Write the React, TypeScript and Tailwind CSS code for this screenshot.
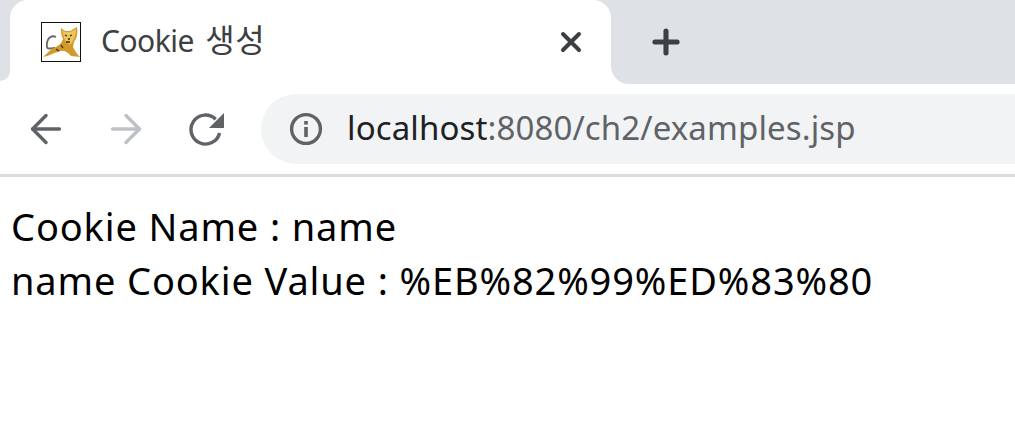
import { Plus, X, ArrowLeft, ArrowRight } from 'lucide-react';

function TomcatIcon() {
  return (
    <svg width="40" height="40" viewBox="0 0 40 40" className="shrink-0">
      <rect x="0.5" y="0.5" width="39" height="39" fill="#fff" stroke="#111" />
      <path d="M14 26 C8 26 5 29 6 21 C7 15 11 13 15 15" fill="none" stroke="#666" strokeWidth="1.8" />
      <path d="M2 35 C7 31 9 27 15 25 C19 23 21 20 22 17 C20 13 20 10 20 6 L24 9 L29 9 L36 5 C37 11 36 16 33 20 L32 25 C34 29 36 32 39 35 L30 34 C25 28 21 28 17 30 C12 31 8 34 2 35 Z" fill="#d29a2b" />
      <path d="M21 8 L24 10 L29 10 L35 7 C35 13 33 18 30 22 C27 23 25 20 23 16 Z" fill="#eec55b" />
      <path d="M24 13 L26 14 M29 14 L31 13 M27 17 L29 17 M25 20 L29 20 M20 23 L22 26 M15 27 L18 29" stroke="#3a2a10" strokeWidth="1.3" fill="none" />
    </svg>
  );
}

function ReloadIcon() {
  return (
    <svg width="36" height="36" viewBox="0 0 36 36" fill="none">
      <path d="M30.6 22 A14.5 14.5 0 1 1 26.75 8.25" stroke="#5f6368" strokeWidth="3.4" />
      <path d="M35 2 V17 H20 Z" fill="#5f6368" />
    </svg>
  );
}

function InfoIcon() {
  return (
    <svg width="34" height="34" viewBox="0 0 34 34" fill="none">
      <circle cx="17" cy="17" r="14.4" stroke="#5f6368" strokeWidth="3.4" />
      <rect x="15.2" y="15" width="3.6" height="10" fill="#5f6368" />
      <rect x="15.2" y="9" width="3.6" height="3.6" fill="#5f6368" />
    </svg>
  );
}

export default function App() {
  return (
    <div className="h-[432px] w-[1015px] overflow-hidden bg-white font-['Noto_Sans','Noto_Sans_CJK_KR',sans-serif]">
      <div className="flex h-[84px]">
        <div className="w-[10px] bg-white">
          <div className="h-[81px] rounded-br-[14px] bg-[#dee1e6]" />
        </div>
        <div className="w-[601px] bg-[#dee1e6]">
          <div className="flex h-[84px] items-center rounded-t-[18px] bg-white pl-[31px] pr-[24px]">
            <TomcatIcon />
            <span className="ml-[20px] -mt-[4px] text-[30px] tracking-[-0.5px] text-[#3c4043]">
              Cookie <span className="ml-[4px] text-[32px] tracking-[0.5px]">생성</span>
            </span>
            <X className="ml-auto text-[#3c4043]" size={32} strokeWidth={3} />
          </div>
        </div>
        <div className="flex-1 bg-white">
          <div className="flex h-[84px] items-center rounded-bl-[18px] bg-[#dee1e6] pl-[36px]">
            <Plus className="text-[#3c4043]" size={38} strokeWidth={3.2} />
          </div>
        </div>
      </div>
      <div className="flex h-[93px] items-center border-b-[3px] border-[#dadce0] pl-[23px]">
        <ArrowLeft className="text-[#5f6368]" size={46} strokeWidth={1.8} />
        <ArrowRight className="ml-[34px] text-[#bdc1c6]" size={46} strokeWidth={1.8} />
        <div className="ml-[40px]">
          <ReloadIcon />
        </div>
        <div className="ml-[36px] flex h-[70px] flex-1 items-center rounded-l-[35px] bg-[#f1f3f4] pl-[28px]">
          <InfoIcon />
          <span className="ml-[24px] -mt-[2px] text-[33px] tracking-[0.12px] text-[#5f6368]">
            <span className="text-[#202124]">localhost</span>:8080/ch2/examples.jsp
          </span>
        </div>
      </div>
      <div className="pl-[11px] pt-[22px] text-[38px] leading-[54px] tracking-[0.87px] text-black">
        <div>Cookie Name : name</div>
        <div>name Cookie Value : %EB%82%99%ED%83%80</div>
      </div>
    </div>
  );
}
